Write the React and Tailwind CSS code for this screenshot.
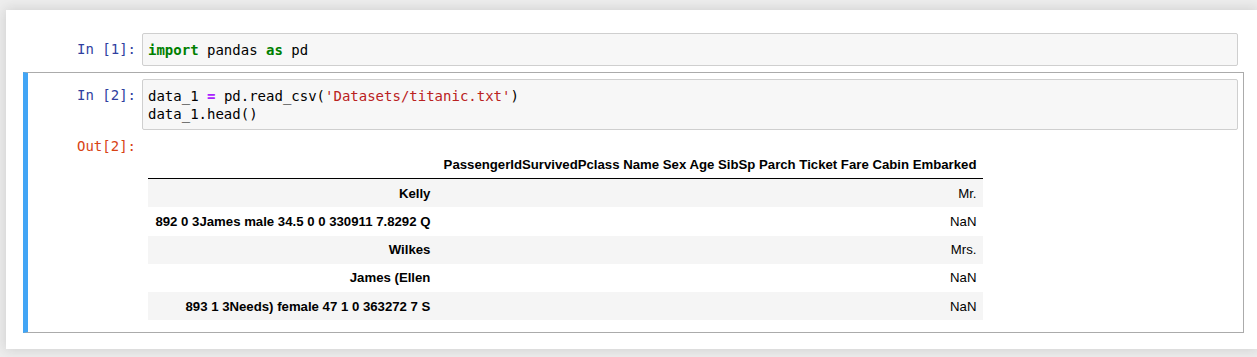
export default function App() {
  const mono = { fontFamily: '"DejaVu Sans Mono", "Liberation Mono", monospace' };
  const sans = { fontFamily: '"Liberation Sans", Arial, sans-serif' };
  const rows = [
    ["Kelly", "Mr."],
    ["892 0 3James male 34.5 0 0 330911 7.8292 Q", "NaN"],
    ["Wilkes", "Mrs."],
    ["James (Ellen", "NaN"],
    ["893 1 3Needs) female 47 1 0 363272 7 S", "NaN"],
  ];
  return (
    <div className="min-h-[357px] bg-[#eeeeee] pt-[10px] pl-[6px] overflow-hidden">
      <div className="bg-white shadow-[0_0_12px_1px_rgba(87,87,87,0.2)] pt-[17px] pb-[16px] pl-[17px] pr-[13px]">
        {/* Cell 1 */}
        <div className="border border-transparent border-l-[5px] pl-px pr-[5px] py-[5px] flex">
          <div
            className="w-[113px] shrink-0 text-right pr-[6px] pt-[7px] text-[14px] leading-[18px] text-[#303f9f]"
            style={mono}
          >
            In&nbsp;[1]:
          </div>
          <div
            className="flex-1 border border-[#cfcfcf] rounded-[2px] bg-[#f7f7f7] pl-[5px] pt-[7px] pb-[6px] text-[14px] leading-[18px] text-black whitespace-pre"
            style={mono}
          >
            <span className="font-bold text-[#008000]">import</span> pandas{" "}
            <span className="font-bold text-[#008000]">as</span> pd
          </div>
        </div>

        {/* Cell 2 (selected) */}
        <div className="border border-[#ababab] border-l-[5px] border-l-[#42a5f5] pl-px pr-[5px] pt-[6px] pb-[5px]">
          <div className="flex">
            <div
              className="w-[113px] shrink-0 text-right pr-[6px] pt-[7px] text-[14px] leading-[18px] text-[#303f9f]"
              style={mono}
            >
              In&nbsp;[2]:
            </div>
            <div
              className="flex-1 border border-[#cfcfcf] rounded-[2px] bg-[#f7f7f7] pl-[5px] pt-[7px] pb-[6px] text-[14px] leading-[18px] text-black whitespace-pre"
              style={mono}
            >
              <div>
                data_1 <span className="font-bold text-[#aa22ff]">=</span> pd.read_csv(
                <span className="text-[#ba2121]">'Datasets/titanic.txt'</span>)
              </div>
              <div>data_1.head()</div>
            </div>
          </div>
          <div className="flex">
            <div
              className="w-[113px] shrink-0 text-right pr-[6px] pt-[7px] text-[14px] leading-[18px] text-[#d84315]"
              style={mono}
            >
              Out[2]:
            </div>
            <div className="flex-1 pl-[6px] pt-[20px] pb-[7px]">
              <table className="border-collapse text-[13.2px] text-black" style={sans}>
                <thead>
                  <tr className="border-b border-black">
                    <th className="w-[289px] px-[6.6px] py-[6.5px] leading-[15.2px]"></th>
                    <th className="w-[546px] px-[6.6px] py-[6.5px] leading-[15.2px] text-right font-bold whitespace-nowrap">
                      PassengerIdSurvivedPclass Name Sex Age SibSp Parch Ticket Fare Cabin Embarked
                    </th>
                  </tr>
                </thead>
                <tbody>
                  {rows.map((r, i) => (
                    <tr key={i} className={i % 2 === 0 ? "bg-[#f5f5f5]" : "bg-white"}>
                      <th className="px-[6.6px] py-[6.5px] leading-[15.2px] text-right font-bold whitespace-nowrap">
                        {r[0]}
                      </th>
                      <td className="px-[6.6px] py-[6.5px] leading-[15.2px] text-right">{r[1]}</td>
                    </tr>
                  ))}
                </tbody>
              </table>
            </div>
          </div>
        </div>
      </div>
    </div>
  );
}
